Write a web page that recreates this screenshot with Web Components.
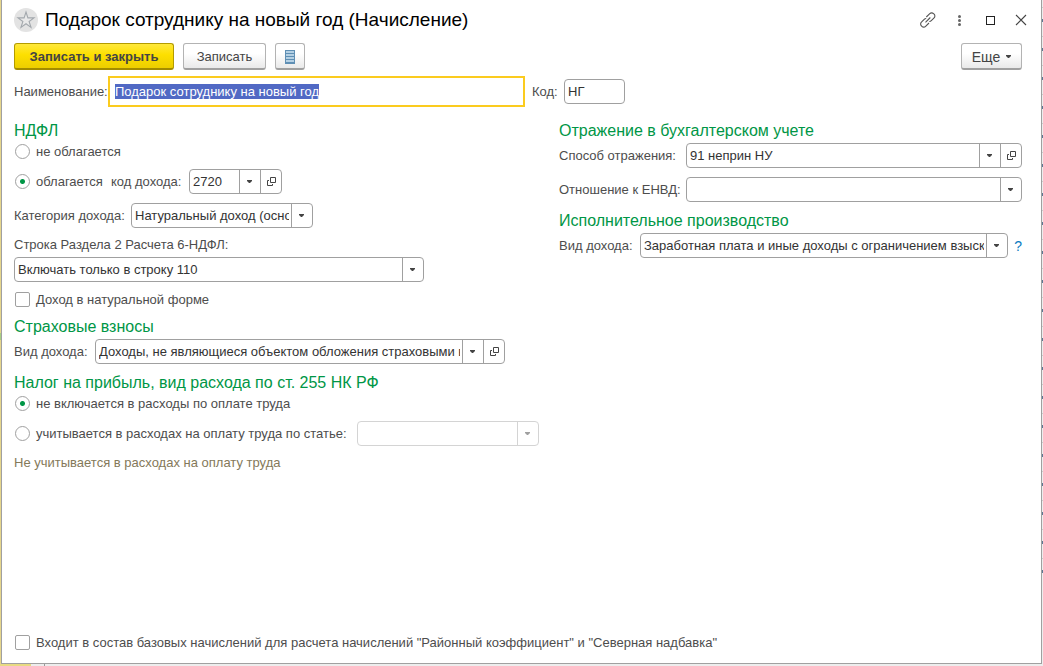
<!DOCTYPE html>
<html lang="ru">
<head>
<meta charset="utf-8">
<title>Подарок сотруднику на новый год (Начисление)</title>
<style>
  body {
    margin: 0;
    font-family: Arial, "Liberation Sans", sans-serif;
    font-size: 13px;
    line-height: 16px;
    color: #4d4d4d;
    background: #fff;
  }
</style>
</head>
<body>
<accrual-form></accrual-form>

<script>
// Window frame with title bar, command bar, body and footer
class FormWindow extends HTMLElement {
  constructor() {
    super();
    this.attachShadow({ mode: 'open' });
  }

  connectedCallback() {
    this.shadowRoot.innerHTML = `
      <style>
        :host {
          display: block;
          box-sizing: border-box;
          min-height: 100vh;
          padding: 0 1px 2px 1px;
          /* edges of the list that lies under the window */
          background:
            linear-gradient(#ededed, #ededed) 100% 100% / 1px 88px no-repeat,
            linear-gradient(#5b7894 3px, #ededed 3px, #ededed 17px, #ccc 17px, #ccc 18px, #ededed 18px) 100% 19px / 1px 29px repeat-y,
            linear-gradient(#999, #999) 44px 100% / 1px 2px no-repeat,
            linear-gradient(#e8da82, #e8da82) 0 100% / 31px 2px no-repeat,
            linear-gradient(#a8cf82, #a8cf82) 0 333px / 1px 7px no-repeat,
            linear-gradient(#e6d68c, #e6d68c) 0 0 / 1px 100% no-repeat,
            #ededed;
          display: flex;
        }
        .frame {
          flex: 1;
          display: flex;
          flex-direction: column;
          box-sizing: border-box;
          padding: 0 19px 12px 12px;
          background: #fff;
          border: 1px solid #a0a0a0;
          border-top: 0;
        }
        header {
          display: flex;
          align-items: center;
          height: 40px;
        }
        h1 {
          flex: 1;
          margin: 0 0 0 7px;
          font-size: 19px;
          line-height: 24px;
          font-weight: 400;
          color: #000;
        }
        .commands {
          display: flex;
          gap: 9px;
          margin: 3px 0 6px;
        }
        ::slotted([slot="more"]) { margin-left: auto; }
        main { flex: 1; }
      </style>
      <div class="frame">
        <header>
          <slot name="favorite"></slot>
          <h1>${this.getAttribute('heading') || ''}</h1>
          <slot name="tools"></slot>
        </header>
        <div class="commands"><slot name="commands"></slot><slot name="more"></slot></div>
        <main><slot></slot></main>
        <footer><slot name="footer"></slot></footer>
      </div>
    `;
  }
}

// Star in a grey circle
class FavoriteStar extends HTMLElement {
  constructor() {
    super();
    this.attachShadow({ mode: 'open' });
    this.shadowRoot.innerHTML = `
      <style>
        :host { display: block; }
        button {
          display: block;
          width: 24px;
          height: 24px;
          padding: 0;
          border: 0;
          border-radius: 50%;
          background: #e3e3e3;
        }
        svg { display: block; }
      </style>
      <button type="button" aria-label="Избранное">
        <svg width="24" height="24" viewBox="0 0 24 24" fill="#e9e9e9" stroke="#a3a8ad" stroke-width="1.1">
          <path d="M12 4l1.900 5.900h6.100l-4.900 3.600 1.900 5.900-5-3.600-5 3.600 1.900-5.900L4 9.900h6.100z"/>
        </svg>
      </button>
    `;
  }
}

// Link, menu, maximize and close icons of the title bar
class WindowTools extends HTMLElement {
  constructor() {
    super();
    this.attachShadow({ mode: 'open' });
    this.shadowRoot.innerHTML = `
      <style>
        :host { display: flex; gap: 15px; margin-right: -7px; }
        button {
          width: 16px;
          height: 16px;
          padding: 0;
          border: 0;
          background: none;
        }
        svg { display: block; }
      </style>
      <button type="button" aria-label="Ссылка">
        <svg width="16" height="16" viewBox="0 0 16 16" fill="none" stroke="#555" stroke-width="1.1">
          <path d="M6.300 5L9.800 1.600a2.600 2.600 0 0 1 3.700 0l.6.6a2.600 2.600 0 0 1 0 3.700L11.300 8.700a2.600 2.600 0 0 1-2 .8"/>
          <path d="M9 11L5.600 14.400a2.600 2.600 0 0 1-3.700 0l-.5-.5a2.600 2.600 0 0 1 0-3.700L4.200 7.300a2.600 2.600 0 0 1 2-.8"/>
          <path d="M5.500 10.300l4.800-4.800"/>
        </svg>
      </button>
      <button type="button" aria-label="Меню">
        <svg width="16" height="16" viewBox="0 0 16 16" fill="#666">
          <circle cx="8.500" cy="4.500" r="1.500"/>
          <circle cx="8.500" cy="8.500" r="1.500"/>
          <circle cx="8.500" cy="12.500" r="1.500"/>
        </svg>
      </button>
      <button type="button" aria-label="Развернуть">
        <svg width="16" height="16" viewBox="0 0 16 16" fill="none" stroke="#222">
          <rect x="4.500" y="4.500" width="8" height="8"/>
        </svg>
      </button>
      <button type="button" aria-label="Закрыть">
        <svg width="16" height="16" viewBox="0 0 16 16" fill="none" stroke="#444" stroke-width="1.100">
          <path d="M3 3l10 10M13 3l-10 10"/>
        </svg>
      </button>
    `;
  }
}

// Command bar button
class FormButton extends HTMLElement {
  constructor() {
    super();
    this.attachShadow({ mode: 'open' });
  }

  connectedCallback() {
    const label = this.getAttribute('label') || '';
    this.shadowRoot.innerHTML = `
      <style>
        :host { display: block; }
        button {
          display: flex;
          align-items: center;
          justify-content: center;
          gap: 6px;
          box-sizing: border-box;
          width: var(--button-width, auto);
          height: 27px;
          padding: 1px 0 0;
          font: inherit;
          color: #444;
          background: linear-gradient(#fff 40%, #e9e9e9);
          border: 1px solid #b3b3b3;
          border-bottom: 2px solid #a0a0a0;
          border-radius: 3px;
        }
        :host([primary]) button {
          font-weight: 700;
          background: linear-gradient(#ffe83b, #fddf00 45%, #ecce00);
          border-color: #b39b00;
          border-bottom-color: #a38c00;
        }
      </style>
      <button type="button" aria-label="${label || 'Реквизиты'}">${label}<slot></slot></button>
    `;
  }
}

// Section with a green heading
class FormSection extends HTMLElement {
  constructor() {
    super();
    this.attachShadow({ mode: 'open' });
  }

  connectedCallback() {
    this.shadowRoot.innerHTML = `
      <style>
        :host { display: block; }
        h2 {
          margin: 0 0 2px;
          font-size: 16px;
          line-height: 20px;
          font-weight: 400;
          color: #009646;
        }
        .rows {
          display: flex;
          flex-direction: column;
          gap: 9px;
        }
      </style>
      <h2>${this.getAttribute('heading') || ''}</h2>
      <div class="rows"><slot></slot></div>
    `;
  }
}

// Label with a text box
class TextField extends HTMLElement {
  constructor() {
    super();
    this.attachShadow({ mode: 'open' });
  }

  connectedCallback() {
    this.shadowRoot.innerHTML = `
      <style>
        :host {
          display: flex;
          align-items: center;
        }
        label { width: var(--label-width, auto); white-space: nowrap; }
        input {
          box-sizing: border-box;
          width: var(--field-width, 100%);
          height: 25px;
          padding: 0 3px;
          font: inherit;
          color: #333;
          background: #fff;
          border: 1px solid #a0a0a0;
          border-radius: 4px;
          outline: 0;
        }
        :host([active]) input {
          height: 31px;
          padding: 0 5px;
          border: 2px solid #fbcb1e;
          border-radius: 0;
        }
        input::selection { color: #fff; background: #5169c4; }
      </style>
      <label for="field">${this.getAttribute('label') || ''}</label>
      <input id="field" type="text" value="${this.getAttribute('value') || ''}">
    `;
    if (this.hasAttribute('active')) {
      const input = this.shadowRoot.querySelector('input');
      input.focus();
      input.select();
    }
  }
}

// Label with a drop-down and an optional open button
class ChoiceField extends HTMLElement {
  constructor() {
    super();
    this.attachShadow({ mode: 'open' });
  }

  connectedCallback() {
    const value = this.getAttribute('value') || '';
    const open = this.hasAttribute('open-button') ? `
      <button type="button" aria-label="Открыть">
        <svg width="11" height="11" viewBox="0 0 11 11" fill="none" stroke="#444">
          <path d="M4.500 1.500h5v5h-5zM3 4.500H1.500v5h5V8"/>
        </svg>
      </button>` : '';
    this.shadowRoot.innerHTML = `
      <style>
        :host {
          display: flex;
          align-items: center;
          --line: #a0a0a0;
          --arrow: #444;
        }
        :host([disabled]) { --line: #d4d4d4; --arrow: #a0a0a0; }
        :host([stacked]) {
          flex-direction: column;
          align-items: flex-start;
          gap: 4px;
        }
        label { flex: none; width: var(--label-width, auto); white-space: nowrap; }
        .box {
          display: grid;
          grid-template-columns: minmax(0, 1fr) 21px auto;
          box-sizing: border-box;
          width: var(--field-width, auto);
          flex: var(--field-flex, none);
          height: 25px;
          min-width: 0;
          background: #fff;
          border: 1px solid var(--line);
          border-radius: 4px;
        }
        :host([stacked]) .box { flex: none; }
        select {
          grid-area: 1 / 1 / 2 / 3;
          appearance: none;
          min-width: 0;
          margin: 0;
          padding: 0 23px 0 3px;
          font: inherit;
          color: #333;
          background: none;
          border: 0;
          outline: 0;
        }
        .arrow {
          grid-area: 1 / 2 / 2 / 3;
          display: flex;
          align-items: center;
          justify-content: center;
          padding-right: 1px;
          border-left: 1px solid var(--line);
          pointer-events: none;
        }
        button {
          display: flex;
          align-items: center;
          justify-content: center;
          width: 21px;
          padding: 0;
          background: none;
          border: 0;
          border-left: 1px solid var(--line);
        }
      </style>
      <label for="field">${this.getAttribute('label') || ''}</label>
      <div class="box">
        <select id="field" ${this.hasAttribute('disabled') ? 'disabled' : ''}><option>${value}</option></select>
        <span class="arrow"><svg width="5" height="3" viewBox="0 0 5 3"><path d="M0 0h5v1L3 3H2L0 1z" fill="var(--arrow)"/></svg></span>
        ${open}
      </div>
      <slot></slot>
    `;
  }
}

// Radio button or tick box with its label
class OptionField extends HTMLElement {
  constructor() {
    super();
    this.attachShadow({ mode: 'open' });
  }

  connectedCallback() {
    const type = this.getAttribute('type') || 'radio';
    this.shadowRoot.innerHTML = `
      <style>
        :host { display: block; }
        label {
          display: flex;
          align-items: center;
          gap: 6px;
          height: 17px;
          white-space: nowrap;
        }
        input {
          appearance: none;
          flex: none;
          box-sizing: border-box;
          width: 15px;
          height: 15px;
          margin: 0 0 0 1px;
          background: #fff;
          border: 1px solid #a0a0a0;
          border-radius: 2px;
        }
        input[type="radio"] { border-radius: 50%; }
        input[type="radio"]:checked { background: radial-gradient(circle, #009646 2px, #fff 3px); }
        input[type="checkbox"]:checked { background: #009646; }
      </style>
      <label><input type="${type}" ${this.hasAttribute('checked') ? 'checked' : ''}>${this.getAttribute('label') || ''}</label>
    `;

    // Radios sit in separate shadow roots, so the group is kept by hand
    const input = this.shadowRoot.querySelector('input');
    input.addEventListener('change', () => {
      const name = this.getAttribute('name');
      if (type !== 'radio' || !name) return;
      this.getRootNode().querySelectorAll(`option-field[name="${name}"]`).forEach(option => {
        if (option !== this) option.shadowRoot.querySelector('input').checked = false;
      });
    });
  }
}

// The accrual card
class AccrualForm extends HTMLElement {
  constructor() {
    super();
    this.attachShadow({ mode: 'open' });
  }

  connectedCallback() {
    this.shadowRoot.innerHTML = `
      <style>
        :host { display: block; }
        .line { display: flex; align-items: center; }
        .name {
          gap: 7px;
          margin-bottom: 14px;
        }
        .columns {
          display: grid;
          grid-template-columns: 525fr 463fr;
          gap: 20px;
        }
        .column {
          display: flex;
          flex-direction: column;
          gap: 9px;
          min-width: 0;
        }
        .wide { --field-width: 410px; }
        .medium { --field-width: 182px; }
        .fill { --field-flex: 1; }
        .hint { color: #84795a; }
        a {
          margin-left: 6px;
          font-size: 14px;
          color: #0b7bc1;
          text-decoration: none;
        }
      </style>
      <form-window heading="Подарок сотруднику на новый год (Начисление)">
        <favorite-star slot="favorite"></favorite-star>
        <window-tools slot="tools"></window-tools>

        <form-button slot="commands" primary label="Записать и закрыть" style="--button-width: 160px"></form-button>
        <form-button slot="commands" label="Записать" style="--button-width: 83px"></form-button>
        <form-button slot="commands" style="--button-width: 30px">
          <svg width="10" height="14" viewBox="0 0 10 14">
            <rect width="10" height="14" fill="#5f8fb4"/>
            <path d="M1 2h8M1 5h8M1 8h8M1 11h8" stroke="#b4d0e4" stroke-width="2"/>
          </svg>
        </form-button>
        <form-button slot="more" label="Еще" style="--button-width: 61px; font-size: 14px">
          <svg width="5" height="3" viewBox="0 0 5 3"><path d="M0 0h5v1L3 3H2L0 1z" fill="#444"/></svg>
        </form-button>

        <div class="line name">
          <text-field active label="Наименование:" value="Подарок сотруднику на новый год" style="--label-width: 94px; --field-width: 417px"></text-field>
          <text-field label="Код:" value="НГ" style="--label-width: 32px; --field-width: 61px"></text-field>
        </div>

        <div class="columns">
          <div class="column">
            <form-section heading="НДФЛ">
              <option-field name="ndfl" label="не облагается"></option-field>
              <div class="line">
                <option-field name="ndfl" checked label="облагается" style="width: 97px"></option-field>
                <choice-field open-button label="код дохода:" value="2720" style="--label-width: 78px; --field-width: 93px"></choice-field>
              </div>
              <choice-field class="medium" label="Категория дохода:" value="Натуральный доход (основная налоговая база)" style="--label-width: 117px"></choice-field>
              <choice-field class="wide" stacked label="Строка Раздела 2 Расчета 6-НДФЛ:" value="Включать только в строку 110"></choice-field>
              <option-field type="checkbox" label="Доход в натуральной форме"></option-field>
            </form-section>

            <form-section heading="Страховые взносы">
              <choice-field class="wide" open-button label="Вид дохода:" value="Доходы, не являющиеся объектом обложения страховыми взносами" style="--label-width: 81px"></choice-field>
            </form-section>

            <form-section heading="Налог на прибыль, вид расхода по ст. 255 НК РФ">
              <option-field name="profit" checked label="не включается в расходы по оплате труда"></option-field>
              <div class="line">
                <option-field name="profit" label="учитывается в расходах на оплату труда по статье:" style="width: 343px"></option-field>
                <choice-field class="medium" disabled></choice-field>
              </div>
              <div class="hint">Не учитывается в расходах на оплату труда</div>
            </form-section>
          </div>

          <div class="column">
            <form-section heading="Отражение в бухгалтерском учете">
              <choice-field class="fill" open-button label="Способ отражения:" value="91 неприн НУ" style="--label-width: 127px"></choice-field>
              <choice-field class="fill" label="Отношение к ЕНВД:" style="--label-width: 127px"></choice-field>
            </form-section>

            <form-section heading="Исполнительное производство">
              <choice-field class="fill" label="Вид дохода:" value="Заработная плата и иные доходы с ограничением взыскания" style="--label-width: 81px">
                <a href="#">?</a>
              </choice-field>
            </form-section>
          </div>
        </div>

        <option-field slot="footer" type="checkbox" label='Входит в состав базовых начислений для расчета начислений &quot;Районный коэффициент&quot; и &quot;Северная надбавка&quot;'></option-field>
      </form-window>
    `;
  }
}

customElements.define('form-window', FormWindow);
customElements.define('favorite-star', FavoriteStar);
customElements.define('window-tools', WindowTools);
customElements.define('form-button', FormButton);
customElements.define('form-section', FormSection);
customElements.define('text-field', TextField);
customElements.define('choice-field', ChoiceField);
customElements.define('option-field', OptionField);
customElements.define('accrual-form', AccrualForm);
</script>
</body>
</html>
